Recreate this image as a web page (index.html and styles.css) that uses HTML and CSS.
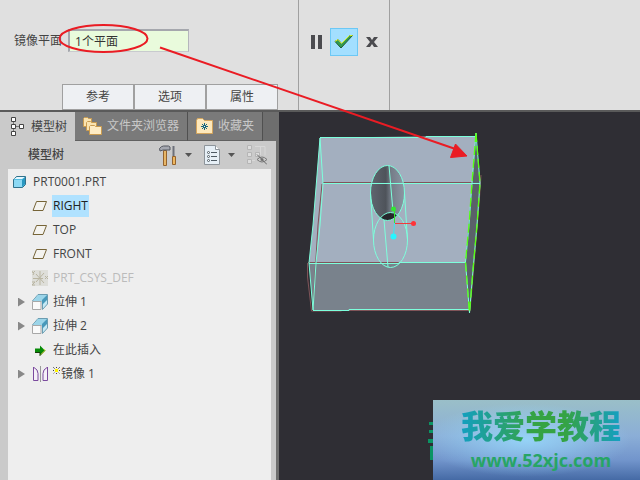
FILE: index.html
```html
<!DOCTYPE html>
<html lang="zh-CN">
<head>
<meta charset="utf-8">
<title>PRT0001.PRT</title>
<link rel="stylesheet" href="styles.css">
</head>
<body>
<div class="app">
  <header class="dashboard">
    <div class="options">
      <div class="field">
        <label for="plane">镜像平面</label>
        <input id="plane" type="text" value="1个平面">
      </div>
      <nav class="panels">
        <button type="button">参考</button>
        <button type="button">选项</button>
        <button type="button">属性</button>
      </nav>
    </div>
    <div class="actions">
      <button type="button" class="act" aria-label="暂停">
        <svg width="11" height="14" viewBox="0 0 11 14"><path d="M0 0h4v14H0zM7 0h4v14H7z" fill="#4b4b4f"/></svg>
      </button>
      <button type="button" class="act confirm" aria-label="确定">
        <svg width="20" height="16" viewBox="0 0 20 16"><path d="M1 7.500l3-2 3.500 4 8-8h3L7 14z" fill="#329a51" stroke="#1f5c35"/><path d="M1 7.500l3-2 3.500 4 8-8h3" fill="none" stroke="#d9ee22"/></svg>
      </button>
      <button type="button" class="act" aria-label="取消">
        <svg width="12" height="10" viewBox="0 0 12 10"><path d="M0 0h4l2 3 2-3h4L8 5l4 5H8L6 7l-2 3H0l4-5z" fill="#4b4b4f"/></svg>
      </button>
    </div>
  </header>

  <div class="work">
    <aside class="side">
      <nav class="tabs">
        <button type="button" class="tab active">
          <svg width="13" height="19" viewBox="0 0 13 19"><path d="M2.500 4v10M4 9.500h5" stroke="#777"/><path d="M.5.5h4v4h-4zM.5 7.500h4v4h-4zM.5 14.500h4v4h-4zM8.500 7.500h4v4h-4z" fill="#fff" stroke="#444"/></svg>
          模型树
        </button>
        <button type="button" class="tab">
          <svg width="19" height="19" viewBox="0 0 19 19"><g fill="#f9e3b0" stroke="#c99b50"><path d="M.5 1.500l1-1h3l1 1h3v8h-8z"/><path d="M3.500 5.500l1-1h3l1 1h5v8h-10z"/><path d="M6.500 9.500l1-1h4l1 1h6v8h-12z" fill="#fdebc4"/></g></svg>
          文件夹浏览器
        </button>
        <button type="button" class="tab">
          <svg width="17" height="16" viewBox="0 0 17 16"><path d="M.5 2.500l1-2h5l2 2h8v13H.5z" fill="#fde8bb" stroke="#d3a45c"/><path d="M8.500 5v7M5 8.500h7M6 6l5 5M11 6l-5 5" stroke="#17677f"/><path d="M8 8h1v1H8z" fill="#fff"/></svg>
          收藏夹
        </button>
      </nav>
      <div class="panel">
        <div class="bar">
          <h1>模型树</h1>
          <div class="tools">
            <button type="button" aria-label="设置">
              <svg width="18" height="21" viewBox="0 0 18 21"><path d="M4.500 5.500h3v15h-3z" fill="#e6b566" stroke="#94632d"/><path d="M.5 3.500q2-2.500 4-2.500h5l1.500 1v3H8V5H4L1 6z" fill="#a4a7b0" stroke="#555861"/><path d="M14.500 1v10" stroke="#6d707a" stroke-width="2"/><path d="M13.500 11.500h3v8h-3z" fill="#edb760" stroke="#94632d"/></svg>
              <svg width="7" height="4" viewBox="0 0 7 4"><path d="M0 0h7L3.500 4z" fill="#555"/></svg>
            </button>
            <button type="button" aria-label="显示">
              <svg width="16" height="20" viewBox="0 0 16 20"><path d="M.5.5h11l4 4v15H.5z" fill="#e6eff6" stroke="#8d949a"/><path d="M11.500.5v4h4" fill="#fff" stroke="#8d949a"/><path d="M7 7.500h6M7 11.500h6M7 15.500h6" stroke="#4e5a63"/><g fill="#fff" stroke="#4e5a63"><circle cx="4.500" cy="7.500" r="1"/><circle cx="4.500" cy="11.500" r="1"/><circle cx="4.500" cy="15.500" r="1"/></g></svg>
              <svg width="7" height="4" viewBox="0 0 7 4"><path d="M0 0h7L3.500 4z" fill="#555"/></svg>
            </button>
            <button type="button" aria-label="隐藏" disabled>
              <svg width="20" height="20" viewBox="0 0 20 20"><path d="M8 1.500h10v9M8 8.500h4M13.500 2v8M4 15.500h4" fill="none" stroke="#d8d8d8"/><path d="M.5.5h4v4h-4zM.5 7.500h4v4h-4zM.5 14.500h4v4h-4zM8.500 7.500h4v4h-4z" fill="#ddd" stroke="#b5b5b5"/><path d="M10 14.500q5-5 10 0q-5 5-10 0z" fill="#ccc" stroke="#777"/><circle cx="15" cy="14.500" r="1.500" fill="#777"/><path d="M10 9.500l10 10" stroke="#666"/></svg>
            </button>
          </div>
        </div>
        <ul class="tree">
          <li class="root">
            <svg class="ico" width="16" height="16" viewBox="0 0 16 16"><path d="M1.500 5.500l3-3h9v8l-3 3h-9z" fill="#56bfe2" stroke="#31718b"/><path d="M2 5l3-2h8l-3 2z" fill="#e6f8ff"/><path d="M2 6h8v7H2z" fill="#8dd9f4"/><path d="M10 6l3-3v7l-3 3z" fill="#2998c1"/></svg>
            <span>PRT0001.PRT</span>
          </li>
          <li><i></i><svg class="ico" width="16" height="16" viewBox="0 0 16 16"><path d="M1 12.500l3.500-9h10l-3.500 9z" fill="#f4f3ef" stroke="#766437"/></svg><span class="selected">RIGHT</span></li>
          <li><i></i><svg class="ico" width="16" height="16" viewBox="0 0 16 16"><path d="M1 12.500l3.500-9h10l-3.500 9z" fill="#f4f3ef" stroke="#766437"/></svg><span>TOP</span></li>
          <li><i></i><svg class="ico" width="16" height="16" viewBox="0 0 16 16"><path d="M1 12.500l3.500-9h10l-3.500 9z" fill="#f4f3ef" stroke="#766437"/></svg><span>FRONT</span></li>
          <li class="muted"><i></i><svg class="ico" width="16" height="16" viewBox="0 0 16 16"><path d="M0 0h16v16H0z" fill="#deded9"/><path d="M8 1v14M1 8.500h10M4 4l8 9M12 3l-8 9M0 1l1 2 2-2M2 3L1 5M13 6l3 3M16 6l-3 3M0 12h3l-3 3h3" fill="none" stroke="#b9b5a2"/></svg><span>PRT_CSYS_DEF</span></li>
          <li><i class="twist"></i><svg class="ico" width="16" height="16" viewBox="0 0 16 16"><path d="M6 .5h9.500v9.500l-5 5.500V7H.5z" fill="#c5e9f5" stroke="#6c9db1"/><path d="M6 1h9l-5 6H1z" fill="#9cd5e9"/><path d="M15 1v5l-5 5V6z" fill="#4899ba"/><path d="M.5 7.500h8.500v8H.5z" fill="#fafafa" stroke="#a8a8a8"/></svg><span>拉伸 1</span></li>
          <li><i class="twist"></i><svg class="ico" width="16" height="16" viewBox="0 0 16 16"><path d="M6 .5h9.500v9.500l-5 5.500V7H.5z" fill="#c5e9f5" stroke="#6c9db1"/><path d="M6 1h9l-5 6H1z" fill="#9cd5e9"/><path d="M15 1v5l-5 5V6z" fill="#4899ba"/><path d="M.5 7.500h8.500v8H.5z" fill="#fafafa" stroke="#a8a8a8"/></svg><span>拉伸 2</span></li>
          <li><i></i><svg class="ico" width="16" height="16" viewBox="0 0 16 16"><path d="M3 6.500h5v-3l5 5-5 5v-3H3z" fill="#078a08"/><path d="M3 10.500h5v3l5-5" fill="none" stroke="#163b08"/><path d="M12 7l1 1.500-4 4" fill="none" stroke="#d6e83a"/></svg><span>在此插入</span></li>
          <li><i class="twist"></i><svg class="ico" width="16" height="16" viewBox="0 0 16 16"><path d="M8.500 0v16" stroke="#999"/><path d="M1 1.500h1q4 2 4 6v7H1.500V2M16 1.500h-1q-4 2-4 6v7h4.500V2" fill="#f5f0f8" stroke="#7b4a9e"/></svg><span><svg class="new" width="7" height="7" viewBox="0 0 7 7"><path d="M0 0l7 7M7 0L0 7M3.500 0v7M0 3.500h7" stroke="#444" stroke-dasharray="1 1"/><path d="M2 2h3v3H2z" fill="#fff200"/></svg>镜像 1</span></li>
        </ul>
      </div>
    </aside>

    <main class="view">
      <svg class="model" width="361" height="368" viewBox="279 112 361 368" role="img" aria-label="模型">
        <defs>
          <linearGradient id="bore"><stop offset="0" stop-color="#606670"/><stop offset=".45" stop-color="#4e535a"/><stop offset=".6" stop-color="#747c87"/><stop offset="1" stop-color="#8c97a4"/></linearGradient>
          <clipPath id="rim"><ellipse cx="387.500" cy="193" rx="17" ry="27.500"/></clipPath>
        </defs>
        <path d="M320 137.500L476 136l-3 47-7 79-157 1 4-38z" fill="#a3afbf"/>
        <path d="M309 263h157l4 47H313z" fill="#79828c"/>
        <path d="M476 133l4.500 50-3.500 42-8 88-3.500-51 6.500-79z" fill="#5a6169"/>
        <g fill="none" stroke="#805459">
          <path d="M323 182.500h149M308 262.500h157M322 184l-4 41-5 82M307.500 263v14l4 34h30M481 175l-2 30-9 106M340 310.500h129"/>
        </g>
        <ellipse cx="387.500" cy="193" rx="17" ry="27.500" fill="url(#bore)"/>
        <ellipse cx="390.500" cy="240" rx="17" ry="27.500" fill="#27272c" clip-path="url(#rim)"/>
        <g fill="none" stroke="#7dffdc">
          <path d="M320 137.500h106v-1h49M320 138l-7 87-4 38 4 47M320 138l3 46-3 41-4 38-3 47M323 183.500h157M309 263.500h90v-1h66M313 310.500h36v-1h120"/>
          <ellipse cx="387.500" cy="193" rx="17" ry="27.500"/>
          <ellipse cx="390.500" cy="240" rx="17" ry="27.500"/>
          <path d="M370.500 193l3 47M404.500 193l3 47M389 165.500l4 46M384 220l4 47"/>
          <path d="M476 133l-4 50-3 42-3.500 37 4 51M476 133l4 50-3 42-4 45-3.500 43"/>
        </g>
        <path d="M476 133l-4 50-3 42-3.500 37 4 51M476 133l4 50-3 42-4 45-3.500 43" fill="none" stroke="#57ff12" stroke-width="1.300" stroke-dasharray="9 4"/>
        <path d="M394.500 209v14" stroke="#32e632"/>
        <path d="M395 223.500h18" stroke="#f03b3b"/>
        <path d="M394.500 223l-1 13" stroke="#35e8f4"/>
        <circle cx="393.500" cy="209" r="2.500" fill="#32e632"/>
        <circle cx="413.500" cy="223.500" r="2.500" fill="#ff3338"/>
        <circle cx="393.500" cy="236.500" r="3" fill="#27f4ff"/>
        <path d="M429 422h5v3h-5zM429 430h5v3h-5zM428 439h6v4h-6zM430 446h4v14h-4z" fill="#0b9464"/>
      </svg>
      <div class="brand">
        <strong>我爱学教程</strong>
        <a href="#site">www.52xjc.com</a>
      </div>
    </main>
  </div>

  <svg class="note" width="640" height="480" viewBox="0 0 640 480" aria-hidden="true">
    <ellipse cx="103.500" cy="38.500" rx="44" ry="13.500" fill="none" stroke="#ea1c24" stroke-width="2"/>
    <path d="M160 47.500l294 101" stroke="#ea1c24" stroke-width="2"/>
    <path d="M455.500 144l11.500 12-16.500 1.500z" fill="#ea1c24" stroke="#ea1c24"/>
  </svg>
</div>
</body>
</html>
```
FILE: styles.css
```css
* { box-sizing: border-box; }
body {
  margin: 0;
  font: 12px/16px "Open Sans", "Noto Sans CJK SC", sans-serif;
  color: #444;
}
button, input { font: inherit; color: inherit; margin: 0; }
button { border: 0; background: none; padding: 0; }
svg { display: block; flex: none; }

.app {
  position: relative;
  display: flex;
  flex-direction: column;
  min-height: 100vh;
  overflow: hidden;
}
.dashboard {
  display: flex;
  background: #e0e0e0;
  border-bottom: 2px solid #5a5a5a;
}
.options {
  display: flex;
  flex-direction: column;
  gap: 32px;
  width: 299px;
  padding: 29px 20px 0 14px;
  border-right: 1px solid #a0a0a0;
}
.field { display: flex; align-items: center; gap: 6px; }
.field input {
  width: 121px;
  height: 23px;
  padding: 0 5px;
  border: 1px solid #b4b6bc;
  border-width: 2px 1px 1px 2px;
  border-color: #a5a7ad #b4b6bc #c8cace #a5a7ad;
  background: #e9fbdc;
  color: #333;
}
.panels { display: flex; margin-left: 48px; }
.panels button {
  width: 72px;
  height: 26px;
  border: 1px solid #a0a0a0;
  background: #eef0f3;
}
.actions {
  display: flex;
  align-items: flex-start;
  gap: 2px;
  width: 91px;
  padding: 28px 0 0 5px;
  border-right: 1px solid #a0a0a0;
}
.act { display: grid; place-items: center; width: 24px; height: 28px; }
.confirm { width: 28px; border: 1px solid #6cc8f5; background: #a3dfff; }

.work { display: flex; flex: 1; }
.side {
  display: flex;
  flex-direction: column;
  flex: none;
  width: 279px;
  padding-right: 3px;
  background: #6e6e6e;
}
.tabs { display: flex; height: 29px; }
.tab {
  display: flex;
  align-items: center;
  gap: 5px;
  padding: 0 8px;
  border-right: 1px solid #505050;
  border-bottom: 1px solid #606060;
  background: #7a7a7a;
  color: #c8c8c8;
}
.tab.active {
  gap: 7px;
  padding: 0 8px 0 11px;
  border: 0;
  background: #cacaca;
  color: #444;
}
.panel {
  display: flex;
  flex-direction: column;
  flex: 1;
  padding: 0 5px 0 8px;
  background: #cacaca;
}
.bar {
  display: flex;
  justify-content: space-between;
  align-items: center;
  height: 28px;
  padding: 0 4px 0 20px;
}
.bar h1 { margin: 0; font-size: 12px; font-weight: 500; }
.tools { display: flex; gap: 12px; }
.tools button { display: flex; align-items: center; gap: 8px; }
.tree {
  flex: 1;
  margin: 0;
  padding: 1px 0 0;
  list-style: none;
  background: #eee;
}
.tree li {
  display: flex;
  align-items: center;
  gap: 4px;
  height: 24px;
  padding-left: 8px;
}
.tree .root { padding-left: 4px; }
.tree span { display: flex; padding: 3px 1px; }
.tree .selected { background: #b0e2ff; color: #222; }
.tree .muted { color: #bbb; }
.tree i { width: 12px; height: 9px; }
.tree .twist {
  width: 7px;
  margin: 0 3px 0 2px;
  background: #888;
  clip-path: polygon(0 0, 100% 50%, 0 100%);
}
.new { margin: 1px 1px 0 0; }

.view {
  position: relative;
  flex: 1;
  min-width: 0;
  background: #2f2e34;
}
.brand {
  position: absolute;
  right: 0;
  bottom: 0;
  display: flex;
  flex-direction: column;
  align-items: center;
  width: 207px;
  height: 80px;
  padding: 6px 0 0 9px;
  background:
    radial-gradient(ellipse at 45% 50%, #99dcffcc, #8fc4f400 65%),
    linear-gradient(#9abfc8, #8baed7 45%, #7295cc 75%, #456aa5);
}
.brand strong {
  font: 900 32px/36px "Noto Sans CJK SC", sans-serif;
  background: linear-gradient(90deg, #139fc0, #35a344 45%, #35a344 65%, #149fc5);
  background-clip: text;
  color: transparent;
}
.brand a {
  font: bold 18px/36px "Open Sans", sans-serif;
  color: #27a565;
  text-decoration: none;
}
.note { position: absolute; top: 0; left: 0; pointer-events: none; }
```
